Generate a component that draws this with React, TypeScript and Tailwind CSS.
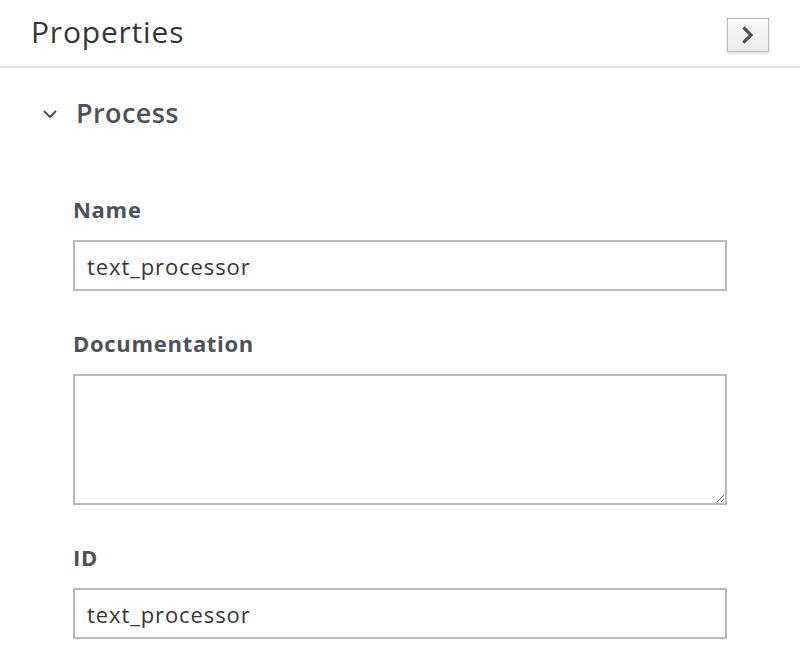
import React from 'react';

const font = { fontFamily: '"Open Sans", "Noto Sans", "Liberation Sans", sans-serif' };

type FieldProps = {
  label: string;
  children: React.ReactNode;
};

const Field: React.FC<FieldProps> = ({ label, children }) => (
  <div className="flex flex-col">
    <label className="text-[22px] leading-[28px] font-bold tracking-[0.7px] text-[#4d5258]">{label}</label>
    <div className="mt-[17px]">{children}</div>
  </div>
);

const inputCls =
  'block w-full h-[51px] border-2 border-[#bbbbbb] bg-white px-[12px] text-[22px] tracking-[0.9px] text-[#363636] outline-none';

const App: React.FC = () => {
  return (
    <div className="w-[800px] h-[660px] bg-white overflow-hidden" style={font}>
      {/* Header */}
      <div className="h-[68px] border-b-2 border-[#e0e0e0] flex items-start justify-between pl-[31px] pr-[31px]">
        <h1 className="mt-[12px] text-[30px] leading-[40px] font-normal tracking-[0.8px] text-[#363636]">Properties</h1>
        <button
          type="button"
          className="mt-[18px] w-[42px] h-[34px] flex items-center justify-center border border-[#b7b7b7] bg-gradient-to-b from-[#fafafa] to-[#ececec] shadow-[0_2px_3px_rgba(0,0,0,0.12)]"
        >
          <svg width="12" height="18" viewBox="0 0 12 18" fill="none">
            <path d="M2.5 2.5 L9 9 L2.5 15.5" stroke="#4d5258" strokeWidth="3.2" strokeLinecap="square" strokeLinejoin="miter" />
          </svg>
        </button>
      </div>

      {/* Section */}
      <div className="pl-[42px] mt-[27px] flex items-center">
        <svg width="16" height="10" viewBox="0 0 16 10" fill="none" className="mt-[2px]">
          <path d="M2 2 L8 8 L14 2" stroke="#4d5258" strokeWidth="2" />
        </svg>
        <h2 className="ml-[18px] text-[27px] leading-[36px] font-semibold tracking-[0.4px] text-[#4d5258]">Process</h2>
      </div>

      <div className="ml-[73px] w-[654px] mt-[64px] flex flex-col gap-[38px]">
        <Field label="Name">
          <input className={inputCls} style={font} defaultValue="text_processor" />
        </Field>
        <Field label="Documentation">
          <textarea
            className="block w-full h-[131px] border-2 border-[#bbbbbb] bg-white px-[12px] py-[8px] text-[22px] text-[#363636] outline-none resize-y"
            style={font}
          />
        </Field>
        <Field label="ID">
          <input className={inputCls} style={font} defaultValue="text_processor" />
        </Field>
      </div>
    </div>
  );
};

export default App;
